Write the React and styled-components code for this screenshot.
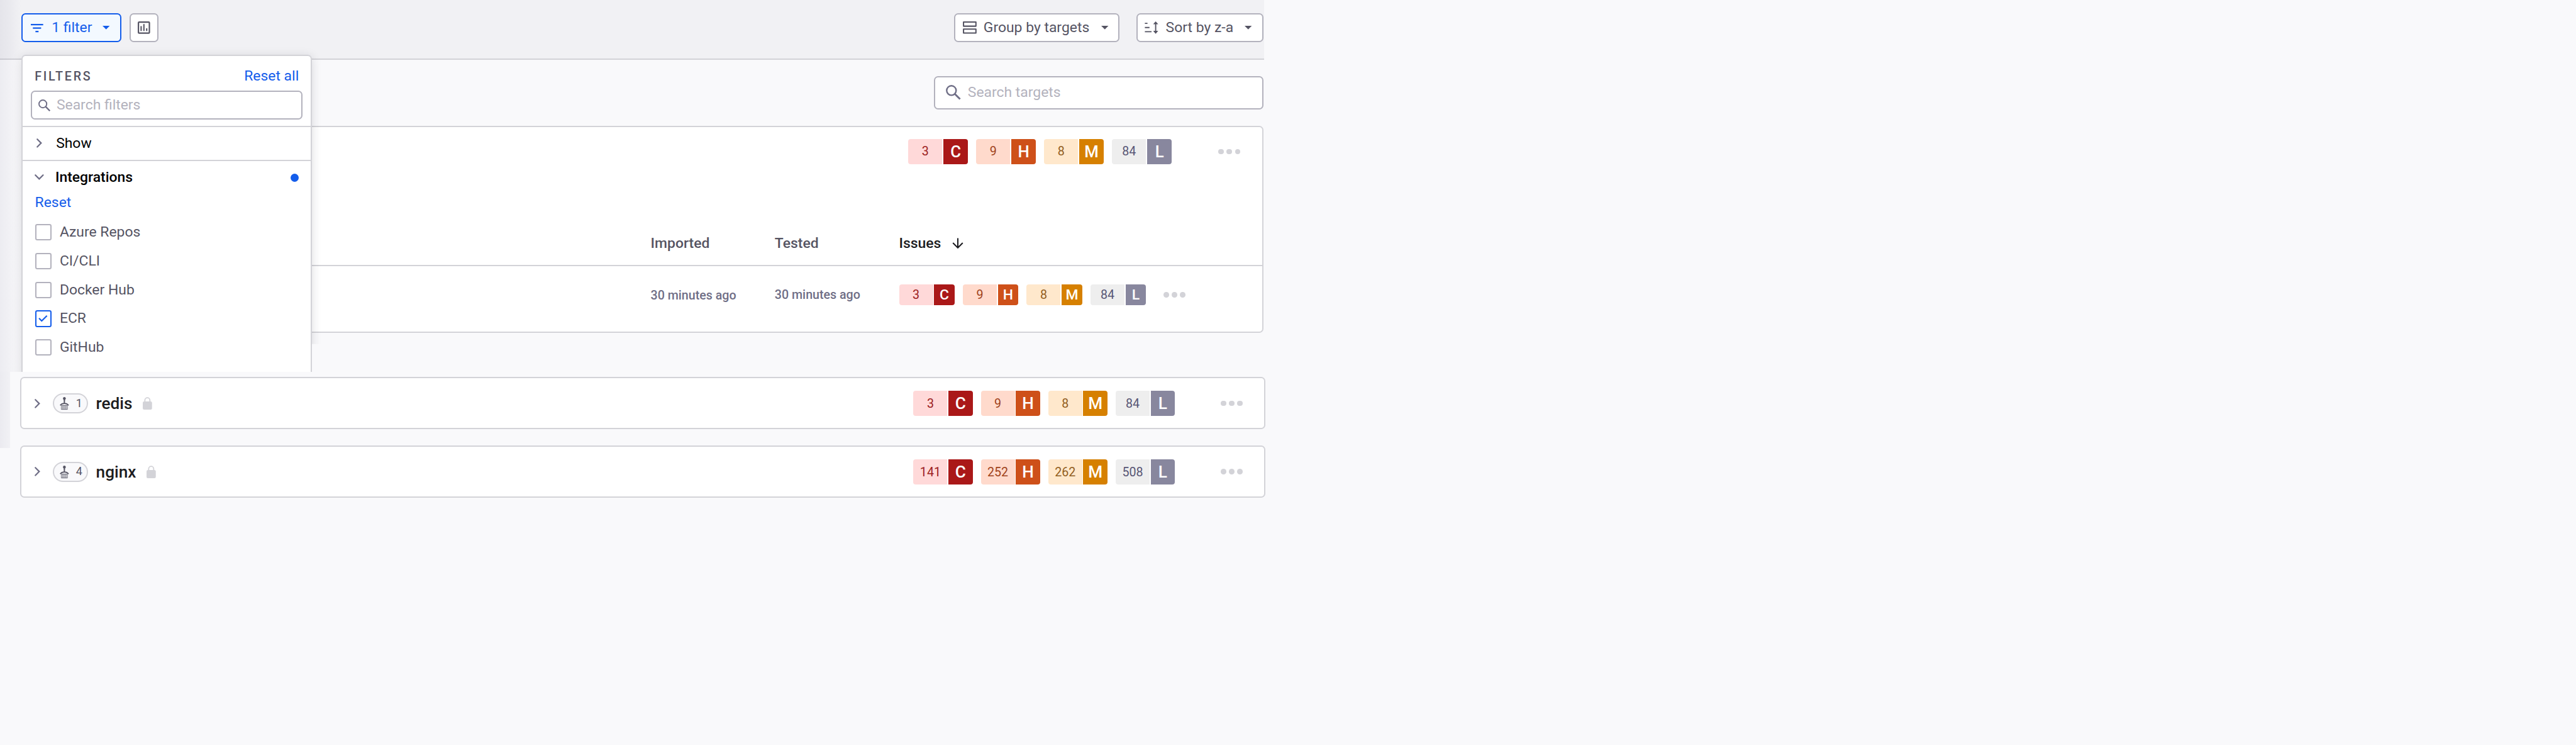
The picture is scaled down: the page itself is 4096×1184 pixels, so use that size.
import React from 'react';
import styled, { createGlobalStyle, css } from 'styled-components';

/* 1rem is ten design pixels */
const GlobalStyle = createGlobalStyle`
  *, *::before, *::after { box-sizing: border-box; }
  html { font-size: 8.1854px; }
  body {
    margin: 0;
    background: #f9f9fb;
    font-family: "Roboto", sans-serif;
    font-size: 2.8rem;
    color: #555463;
  }
  svg { display: block; flex: none; overflow: visible; }
`;

const color = {
  blue: '#145deb',
  ink: '#1c1c21',
  text: '#555463',
  muted: '#6f6e86',
  placeholder: '#b3b2bd',
  line: '#d3d3d8',
  control: '#b3b2bd',
};

const Page = styled.div`
  position: relative;
  height: 144.6rem;
  overflow: hidden;
`;

const Main = styled.main`
  width: 245.6rem;
`;

const Toolbar = styled.header`
  display: flex;
  align-items: flex-start;
  height: 11.6rem;
  padding: 2.6rem 0.2rem 0 4.2rem;
  background: #f1f1f4;
  border-bottom: 2px solid ${color.line};
`;

const Button = styled.button`
  display: flex;
  align-items: center;
  width: ${(p) => p.$width}rem;
  height: 5.6rem;
  padding: 0 0 0 ${(p) => p.$inset}rem;
  border: 2px solid ${(p) => (p.$active ? color.blue : color.control)};
  border-radius: 0.8rem;
  background: ${(p) => (p.$active ? '#f3f9ff' : '#fff')};
  color: ${(p) => (p.$active ? color.blue : color.text)};
  font: inherit;
  line-height: 5.2rem;
  white-space: nowrap;
  margin-left: ${(p) => p.$gap || 0}rem;
`;

const ButtonLabel = styled.span`
  margin-left: ${(p) => p.$gap}rem;
  margin-right: auto;
`;

const CaretSlot = styled.span`
  margin-right: ${(p) => p.$right}rem;
`;

const ToolbarSpacer = styled.div`
  flex: 1;
`;

const SearchBar = styled.div`
  display: flex;
  justify-content: flex-end;
  padding: 3.2rem 0.2rem;
`;

const SearchField = styled.label`
  display: flex;
  align-items: center;
  width: ${(p) => p.$width}rem;
  height: ${(p) => p.$height}rem;
  padding-left: ${(p) => p.$inset}rem;
  border: 2px solid ${color.control};
  border-radius: 0.8rem;
  background: #fff;
  color: ${color.muted};
`;

const SearchInput = styled.input`
  flex: 1;
  min-width: 0;
  margin-left: ${(p) => p.$gap}rem;
  padding: 0;
  border: 0;
  background: none;
  font: inherit;
  line-height: 4rem;
  outline: none;
  &::placeholder { color: ${color.placeholder}; opacity: 1; }
`;

const cardFrame = css`
  border: 2px solid ${color.line};
  border-radius: 0.8rem;
  background: #fff;
`;

const OpenCard = styled.section`
  ${cardFrame}
  height: 40.2rem;
  margin: 0 0.2rem 0 4.2rem;
  display: flex;
  flex-direction: column;
`;

const OpenCardHeader = styled.div`
  display: flex;
  justify-content: flex-end;
  align-items: flex-start;
  height: 18.4rem;
  padding: 2.4rem 4.2rem 0 0;
`;

const IssueTable = styled.div`
  display: flex;
  flex-direction: column;
`;

const TableRow = styled.div`
  display: grid;
  grid-template-columns: 24.1rem 24.15rem 1fr;
  align-items: center;
  height: ${(p) => (p.$head ? 8.6 : 11.2)}rem;
  padding-left: 121.95rem;
  border-bottom: ${(p) => (p.$head ? `2px solid ${color.line}` : '0')};
`;

const HeadCell = styled.div`
  display: flex;
  align-items: center;
  gap: 2.1rem;
  padding-top: 0.1rem;
  font-weight: 500;
  line-height: 4rem;
  color: ${(p) => (p.$sorted ? color.ink : color.text)};
`;

const TimeCell = styled.div`
  font-size: 2.4rem;
  font-weight: 500;
  line-height: 3rem;
  color: ${color.muted};
  padding-top: ${(p) => p.$drop || 0.15}rem;
`;

const BadgeCell = styled.div`
  display: flex;
  align-items: center;
`;

const TargetList = styled.div`
  display: flex;
  flex-direction: column;
  gap: 3.2rem;
  margin: 8.6rem -0.2rem 0 3.85rem;
`;

const TargetRow = styled.section`
  ${cardFrame}
  display: flex;
  align-items: center;
  height: 10.1rem;
  padding: 0.1rem 4.15rem 0 2.6rem;
`;

const CountPill = styled.span`
  display: flex;
  align-items: center;
  width: 6.8rem;
  height: 3.9rem;
  margin-left: 2.5rem;
  padding-left: 1.1rem;
  border: 2px solid ${color.line};
  border-radius: 2rem;
  background: #f9f9fb;
  font-size: 2.2rem;
  line-height: 3.5rem;
`;

const PillNumber = styled.span`
  width: 1.4rem;
  margin-left: 1.25rem;
  text-align: center;
`;

const TargetName = styled.span`
  margin: 0 2rem 0 1.55rem;
  padding-top: 0.1rem;
  font-size: 3.2rem;
  font-weight: 500;
  line-height: 4rem;
  color: ${color.ink};
`;

const RowSpacer = styled.div`
  flex: 1;
`;

const tones = {
  C: { soft: '#ffd9d9', text: '#9c2020', solid: '#aa1818' },
  H: { soft: '#ffdacc', text: '#a0421b', solid: '#ce5019' },
  M: { soft: '#ffe8cc', text: '#925e1e', solid: '#d68000' },
  L: { soft: '#eeeeee', text: '#585675', solid: '#88879e' },
};

const sizes = {
  small: { count: 6.6, letter: 4, height: 4, gap: 1.6, font: 2.8 },
  large: { count: 6.6, letter: 4.8, height: 4.8, gap: 1.6, font: 3.15 },
  row: { count: 6.6, letter: 4.7, height: 4.87, gap: 1.6, font: 3.2 },
};

const BadgeGroup = styled.div`
  display: flex;
  gap: ${(p) => sizes[p.$size].gap}rem;
`;

const Badge = styled.div`
  display: flex;
  gap: 0.2rem;
  height: ${(p) => sizes[p.$size].height}rem;
  line-height: ${(p) => sizes[p.$size].height + 0.15}rem;
  text-align: center;
`;

const BadgeCount = styled.span`
  width: ${(p) => sizes[p.$size].count}rem;
  height: 100%;
  border-radius: 0.5rem 0 0 0.5rem;
  background: ${(p) => tones[p.$level].soft};
  color: ${(p) => tones[p.$level].text};
  font-size: 2.4rem;
`;

const BadgeLetter = styled.span`
  width: ${(p) => sizes[p.$size].letter}rem;
  height: 100%;
  border-radius: 0 0.5rem 0.5rem 0;
  background: ${(p) => tones[p.$level].solid};
  color: #fff;
  font-size: ${(p) => sizes[p.$size].font}rem;
  font-weight: 500;
`;

const MoreButton = styled.span`
  display: flex;
  align-items: center;
  align-self: ${(p) => (p.$top ? 'flex-start' : 'center')};
  gap: 0.55rem;
  height: 4.8rem;
  margin-left: ${(p) => p.$gap}rem;
  &::before, &::after, & > i {
    content: '';
    width: 1.06rem;
    height: 1.06rem;
    border-radius: 50%;
    background: ${color.line};
  }
`;

const RailShade = styled.div`
  position: absolute;
  z-index: 2;
  left: 0;
  top: 0;
  width: 4.2rem;
  height: 72.2rem;
  background: linear-gradient(90deg, rgba(70, 65, 110, 0.07), rgba(70, 65, 110, 0.045) 45%, rgba(70, 65, 110, 0.01) 80%, transparent);
`;

const RailShadeTail = styled(RailShade)`
  top: 72.2rem;
  width: 2rem;
  height: 14.8rem;
  background: linear-gradient(90deg, rgba(70, 65, 110, 0.08), rgba(70, 65, 110, 0.045));
`;

const MenuShadow = styled.div`
  position: absolute;
  z-index: 1;
  left: 0;
  top: 9rem;
  width: 66rem;
  height: 63.2rem;
  clip-path: polygon(0 0, 66rem 0, 66rem 57.8rem, 30rem 57.8rem, 30rem 63.2rem, 0 63.2rem);
  pointer-events: none;
  &::before {
    content: '';
    position: absolute;
    left: 4.2rem;
    top: 1.6rem;
    width: 56.4rem;
    height: 90rem;
    border-radius: 0.8rem;
    box-shadow: 0 0.4rem 2rem rgba(30, 30, 40, 0.15);
  }
`;

const FilterMenu = styled.aside`
  position: absolute;
  z-index: 3;
  left: 4.2rem;
  top: 10.6rem;
  width: 56.4rem;
  height: 61.6rem;
  display: flex;
  flex-direction: column;
  border: 2px solid ${color.line};
  border-bottom: 0;
  border-radius: 0.8rem 0.8rem 0 0;
  background: #fff;
`;

const MenuTop = styled.div`
  height: 13.8rem;
  padding: 2rem 1.55rem 0;
  border-bottom: 2px solid ${color.line};
`;

const MenuHeading = styled.div`
  display: flex;
  justify-content: space-between;
  align-items: center;
  height: 4rem;
  margin: 0 0.75rem 0.8rem;
`;

const MenuTitle = styled.span`
  font-size: 2.4rem;
  font-weight: 500;
  letter-spacing: 0.34rem;
`;

const TextButton = styled.a`
  color: ${color.blue};
  line-height: 4rem;
`;

const Facet = styled.div`
  display: flex;
  align-items: center;
  height: ${(p) => (p.$open ? 6 : 6.6)}rem;
  padding: ${(p) => (p.$open ? '0.2rem 2.35rem 0 2.25rem' : '0 2.35rem 0.1rem 2.65rem')};
  border-bottom: ${(p) => (p.$open ? '0' : `2px solid ${color.line}`)};
  color: ${color.muted};
`;

const FacetName = styled.span`
  margin-left: ${(p) => (p.$open ? 2.25 : 2.7)}rem;
  margin-right: auto;
  font-weight: ${(p) => (p.$open ? 500 : 400)};
  color: #000;
`;

const Dot = styled.span`
  width: 1.6rem;
  height: 1.6rem;
  margin-top: 0.3rem;
  border-radius: 50%;
  background: ${color.blue};
`;

const FacetBody = styled.div`
  display: flex;
  flex-direction: column;
  padding: 0.2rem 0 0 2.35rem;
`;

const OptionList = styled.div`
  display: flex;
  flex-direction: column;
  gap: 2.4rem;
  margin-top: 2.05rem;
`;

const Option = styled.label`
  display: flex;
  align-items: center;
  gap: 1.6rem;
  height: 3.2rem;
  line-height: 3.2rem;
`;

const CheckBox = styled.span`
  display: flex;
  align-items: center;
  justify-content: center;
  width: 3.2rem;
  height: 3.2rem;
  border: 2px solid ${(p) => (p.$checked ? color.blue : color.control)};
  border-radius: 0.4rem;
  color: ${color.blue};
`;

function Icon({ w, h, children }) {
  return (
    <svg width={`${w / 10}rem`} height={`${h / 10}rem`} viewBox={`0 0 ${w} ${h}`} fill="none" stroke="currentColor">
      {children}
    </svg>
  );
}

const FilterIcon = () => (
  <Icon w={24} h={16}>
    <path d="M0 1.3H24M4 8H20M9 14.7H15" strokeWidth="2.7" />
  </Icon>
);

const ChartIcon = () => (
  <Icon w={24} h={24}>
    <rect x="1.35" y="1.35" width="21.3" height="21.3" rx="1.4" strokeWidth="2.7" />
    <path d="M6.6 9.3V18.7M12 5.3V18.7M17.4 13.3V18.7" strokeWidth="2.5" />
  </Icon>
);

const GroupIcon = () => (
  <Icon w={27} h={24}>
    <path d="M1.3 1.3H25.4V9.3H1.3ZM1.3 14.9H25.4V22.7H1.3Z" strokeWidth="2.5" strokeLinejoin="round" />
  </Icon>
);

const SortIcon = () => (
  <Icon w={27} h={24}>
    <path d="M0.5 3.9H5.6M0.5 11.9H9.5M0.5 19.9H13.5" strokeWidth="2.2" />
    <path d="M21.5 4V20" strokeWidth="2.3" />
    <path d="M21.5 0L26.4 5.6H16.6ZM21.5 24L26.4 18.4H16.6Z" fill="currentColor" stroke="none" />
  </Icon>
);

const Caret = () => (
  <Icon w={14} h={7}>
    <path d="M0 0H14L7 7Z" fill="currentColor" stroke="none" />
  </Icon>
);

const SearchIcon = ({ size }) => (
  <svg width={`${size}rem`} height={`${size}rem`} viewBox="0 0 24 24" fill="none" stroke="currentColor">
    <circle cx="8.9" cy="8.9" r="7.6" strokeWidth="2.4" />
    <path d="M14.6 14.6L22.8 22.8" strokeWidth="3" />
  </svg>
);

const ChevronRight = () => (
  <Icon w={11} h={18}>
    <path d="M1.5 1.5L9 9L1.5 16.5" strokeWidth="2.7" strokeLinecap="round" />
  </Icon>
);

const ChevronDown = () => (
  <Icon w={18} h={11}>
    <path d="M1.5 1.5L9 9L16.5 1.5" strokeWidth="2.7" strokeLinecap="round" />
  </Icon>
);

const ArrowDown = () => (
  <Icon w={22} h={21}>
    <path d="M11 0.5V18.5M1.5 9.8L11 19.2L20.5 9.8" strokeWidth="2.5" />
  </Icon>
);

const CheckIcon = () => (
  <Icon w={18} h={13}>
    <path d="M1.3 5.8L6.5 11L16.7 1" strokeWidth="2.7" />
  </Icon>
);

const LockIcon = () => (
  <svg width="1.8rem" height="2.5rem" viewBox="0 0 18 25" fill="none">
    <path d="M4.1 11V6.3a4.9 4.9 0 0 1 9.8 0V11" stroke={color.line} strokeWidth="2.2" />
    <rect x="0" y="8.6" width="18" height="16" rx="2.6" fill={color.line} />
  </svg>
);

const ServiceIcon = () => (
  <Icon w={18} h={25}>
    <circle cx="9" cy="2.7" r="2.7" fill="currentColor" stroke="none" />
    <path d="M7.6 5H10.4L10 13H8Z" fill="currentColor" stroke="none" />
    <path d="M0.8 16.2C3.2 13 6 12.4 9 12.4S14.8 13 17.2 16.2" strokeWidth="1.9" />
    <path d="M3 16.3H15V24H3ZM5.5 16.3V24M7.8 16.3V24M10.2 16.3V24M12.5 16.3V24" strokeWidth="1" />
  </Icon>
);

const Muted = styled.span`
  color: ${color.muted};
`;

const LEVELS = ['C', 'H', 'M', 'L'];

function SeverityBadges({ counts, size }) {
  return (
    <BadgeGroup $size={size}>
      {LEVELS.map((level, i) => (
        <Badge key={level} $size={size}>
          <BadgeCount $size={size} $level={level}>{counts[i]}</BadgeCount>
          <BadgeLetter $size={size} $level={level}>{level}</BadgeLetter>
        </Badge>
      ))}
    </BadgeGroup>
  );
}

function More({ gap, top }) {
  return <MoreButton $gap={gap} $top={top}><i /></MoreButton>;
}

function Target({ name, projects, counts }) {
  return (
    <TargetRow>
      <Muted><ChevronRight /></Muted>
      <CountPill>
        <ServiceIcon />
        <PillNumber>{projects}</PillNumber>
      </CountPill>
      <TargetName>{name}</TargetName>
      <LockIcon />
      <RowSpacer />
      <SeverityBadges counts={counts} size="row" />
      <More gap={8.9} />
    </TargetRow>
  );
}

const INTEGRATIONS = [
  { name: 'Azure Repos' },
  { name: 'CI/CLI' },
  { name: 'Docker Hub' },
  { name: 'ECR', checked: true },
  { name: 'GitHub' },
];

const TARGETS = [
  { name: 'redis', projects: 1, counts: [3, 9, 8, 84] },
  { name: 'nginx', projects: 4, counts: [141, 252, 262, 508] },
];

export default function App() {
  return (
    <Page>
      <GlobalStyle />
      <Main>
        <Toolbar>
          <Button $active $width={19.4} $inset={1.6}>
            <FilterIcon />
            <ButtonLabel $gap={1.6}>1 filter</ButtonLabel>
            <CaretSlot $right={2.1}><Caret /></CaretSlot>
          </Button>
          <Button $width={5.6} $inset={1.36} $gap={1.6}>
            <ChartIcon />
          </Button>
          <ToolbarSpacer />
          <Button $width={32.2} $inset={1.45}>
            <GroupIcon />
            <ButtonLabel $gap={1.35}>Group by targets</ButtonLabel>
            <CaretSlot $right={2}><Caret /></CaretSlot>
          </Button>
          <Button $width={24.7} $inset={1.4} $gap={3.2}>
            <SortIcon />
            <ButtonLabel $gap={1.4}>Sort by z-a</ButtonLabel>
            <CaretSlot $right={2}><Caret /></CaretSlot>
          </Button>
        </Toolbar>

        <SearchBar>
          <SearchField $width={64} $height={6.4} $inset={2.1}>
            <SearchIcon size={2.9} />
            <SearchInput $gap={1.35} placeholder="Search targets" />
          </SearchField>
        </SearchBar>

        <OpenCard>
          <OpenCardHeader>
            <SeverityBadges counts={[3, 9, 8, 84]} size="large" />
            <More gap={9.05} top />
          </OpenCardHeader>
          <IssueTable>
            <TableRow $head>
              <HeadCell>Imported</HeadCell>
              <HeadCell>Tested</HeadCell>
              <HeadCell $sorted>Issues<ArrowDown /></HeadCell>
            </TableRow>
            <TableRow>
              <TimeCell $drop={0.4}>30 minutes ago</TimeCell>
              <TimeCell>30 minutes ago</TimeCell>
              <BadgeCell>
                <SeverityBadges counts={[3, 9, 8, 84]} size="small" />
                <More gap={3.4} />
              </BadgeCell>
            </TableRow>
          </IssueTable>
        </OpenCard>

        <TargetList>
          {TARGETS.map((t) => <Target key={t.name} {...t} />)}
        </TargetList>
      </Main>

      <MenuShadow />
      <FilterMenu>
        <MenuTop>
          <MenuHeading>
            <MenuTitle>FILTERS</MenuTitle>
            <TextButton>Reset all</TextButton>
          </MenuHeading>
          <SearchField $width={52.8} $height={5.6} $inset={1.2}>
            <SearchIcon size={2.35} />
            <SearchInput $gap={1.2} placeholder="Search filters" />
          </SearchField>
        </MenuTop>
        <Facet>
          <ChevronRight />
          <FacetName>Show</FacetName>
        </Facet>
        <Facet $open>
          <ChevronDown />
          <FacetName $open>Integrations</FacetName>
          <Dot />
        </Facet>
        <FacetBody>
          <TextButton>Reset</TextButton>
          <OptionList>
            {INTEGRATIONS.map((o) => (
              <Option key={o.name}>
                <CheckBox $checked={o.checked}>{o.checked && <CheckIcon />}</CheckBox>
                {o.name}
              </Option>
            ))}
          </OptionList>
        </FacetBody>
      </FilterMenu>
      <RailShade />
      <RailShadeTail />
    </Page>
  );
}
